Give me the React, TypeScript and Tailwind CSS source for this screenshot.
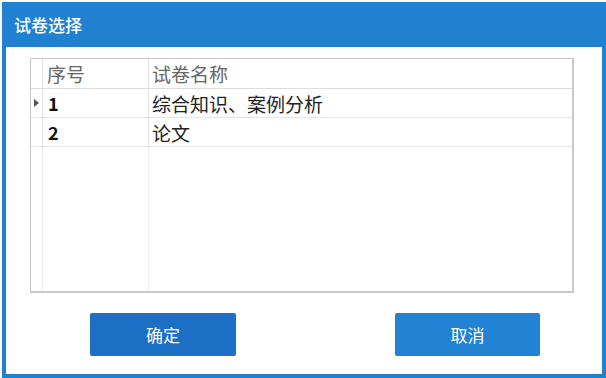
const ROWS = [
  { no: "1", name: "综合知识、案例分析", current: true },
  { no: "2", name: "论文", current: false },
];

function RowArrow() {
  return (
    <svg width="5" height="8" viewBox="0 0 5 8" className="block">
      <path d="M0 0 L5 4 L0 8 Z" fill="#555555" />
    </svg>
  );
}

export default function App() {
  return (
    <div className="h-[378px] w-[606px] bg-white pl-[2px] pt-[2px] font-['Noto_Sans_CJK_SC',sans-serif]">
      <div className="flex h-full flex-col bg-[#2080d2] px-[4px] pb-[4px]">
        {/* title bar */}
        <div className="flex h-[45px] items-center pl-[8px] text-[17px] font-medium leading-none text-white">
          试卷选择
        </div>

        <div className="flex flex-1 flex-col bg-white pl-[24px] pr-[28px] pt-[11px]">
          {/* grid */}
          <div className="flex h-[235px] flex-col border-b-2 border-l border-r-2 border-t border-[#c9c9c9] bg-white">
            <div className="grid h-[30px] grid-cols-[12px_106px_1fr] border-b border-[#dcdcdc]">
              <div className="border-r border-[#e2e2e2]" />
              <div className="flex items-center border-r border-[#e2e2e2] pl-[4px] text-[19px] leading-none text-[#666666]">
                序号
              </div>
              <div className="flex items-center pl-[3px] text-[19px] leading-none text-[#666666]">
                试卷名称
              </div>
            </div>
            {ROWS.map((row) => (
              <div key={row.no} className="grid h-[29px] grid-cols-[12px_106px_1fr] border-b border-[#e4e4e4]">
                <div className="flex items-center justify-center border-r border-[#e2e2e2]">
                  {row.current && <RowArrow />}
                </div>
                <div className="flex items-center border-r border-[#e2e2e2] pl-[5px] text-[18px] font-bold leading-none text-[#111111]">
                  {row.no}
                </div>
                <div className="flex items-center pl-[3px] text-[19px] leading-none text-[#222222]">
                  {row.name}
                </div>
              </div>
            ))}
            {/* empty space below rows */}
            <div className="grid flex-1 grid-cols-[12px_106px_1fr]">
              <div className="border-r border-[#eeeeee]" />
              <div className="border-r border-[#eeeeee]" />
              <div />
            </div>
          </div>

          {/* buttons */}
          <div className="mt-[20px] flex">
            <button className="ml-[60px] flex h-[43px] w-[146px] items-center justify-center rounded-[2px] bg-[#1b70c6] text-[17px] text-white">
              确定
            </button>
            <button className="ml-[159px] flex h-[43px] w-[145px] items-center justify-center rounded-[2px] bg-[#2282d4] text-[17px] text-white">
              取消
            </button>
          </div>
        </div>
      </div>
    </div>
  );
}
